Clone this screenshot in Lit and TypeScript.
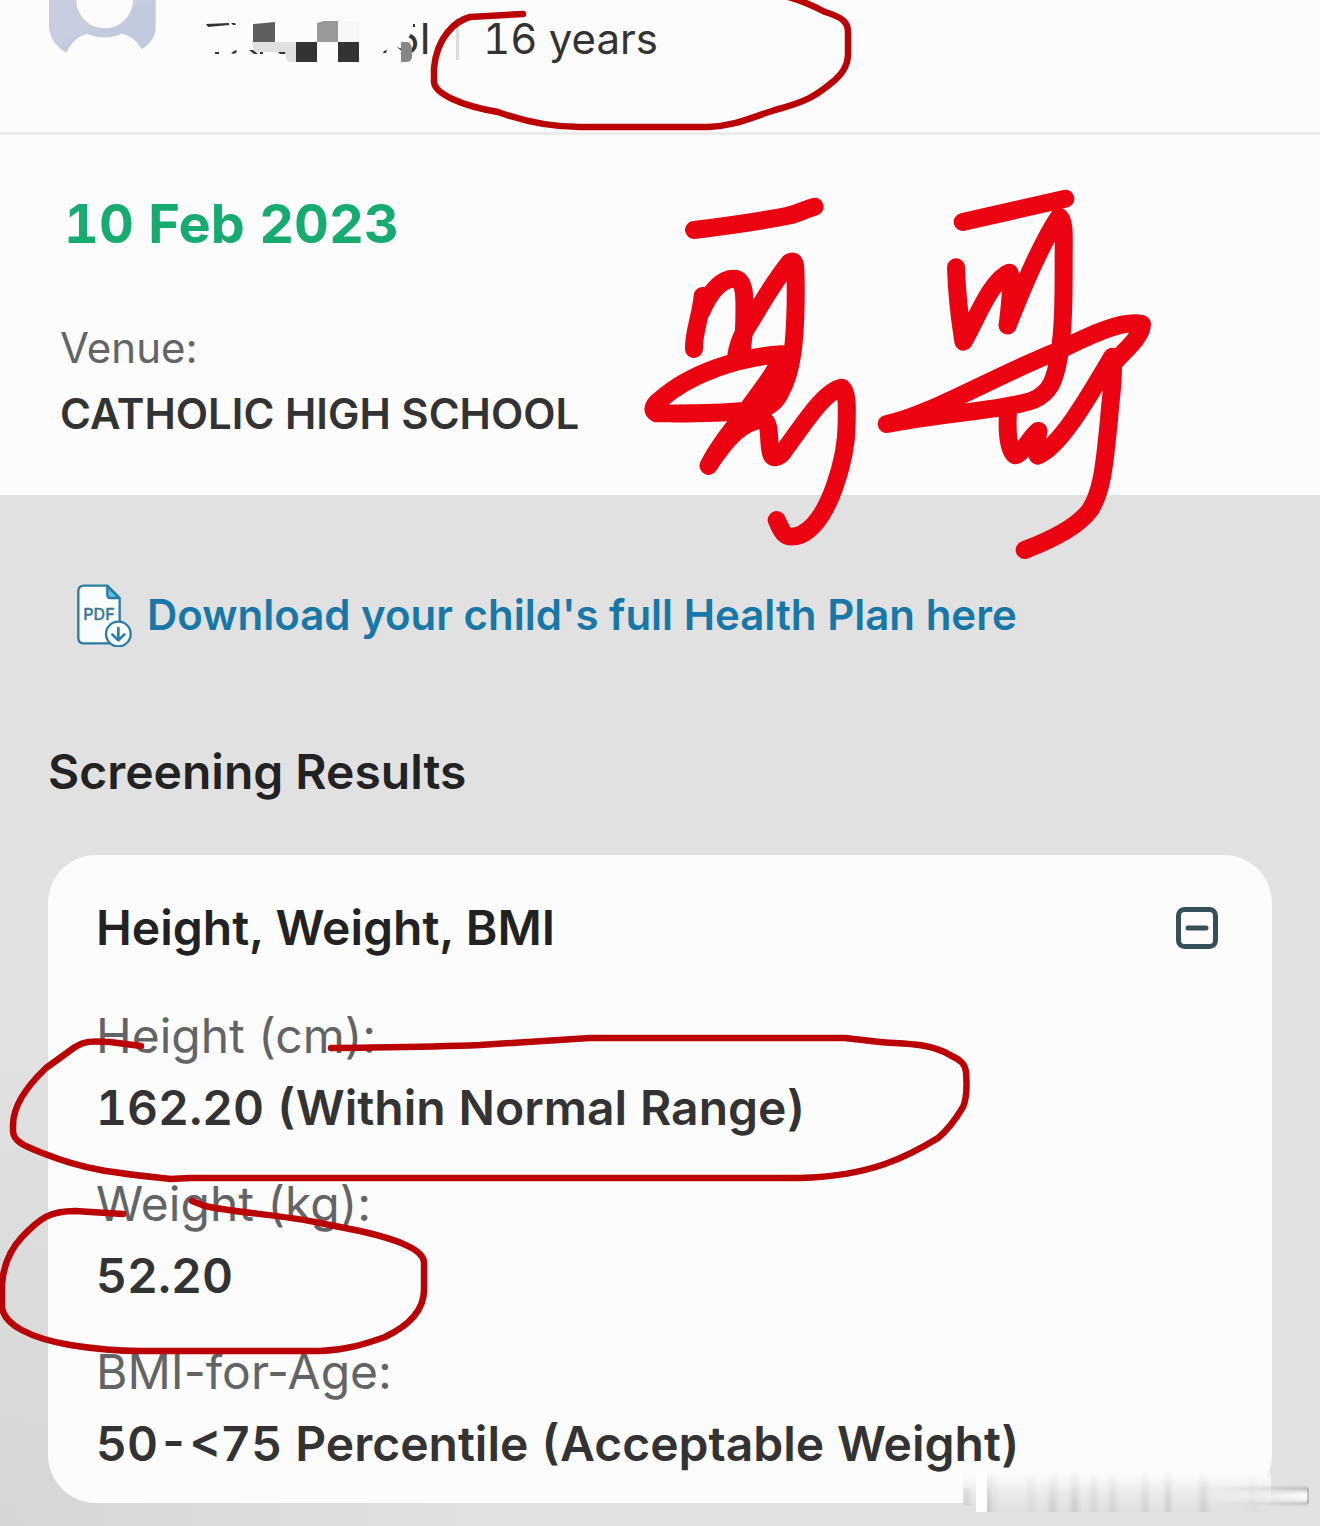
import { LitElement, html, css, svg } from "lit";
import { customElement, property, state } from "lit/decorators.js";

interface Reading {
  label: string;
  value: string;
}

const READINGS: Reading[] = [
  { label: "Height (cm):", value: "162.20 (Within Normal Range)" },
  { label: "Weight (kg):", value: "52.20" },
  { label: "BMI-for-Age:", value: "50-<75 Percentile (Acceptable Weight)" },
];

/* Vertical streaks of the smudge: x, width, colour, opacity */
const STREAKS: [number, number, string, number][] = [
  [22, 12, "#c9c9c9", 0.3],
  [64, 8, "#c4c4c4", 0.3],
  [86, 8, "#bdbdbd", 0.45],
  [108, 7, "#b9b9b9", 0.5],
  [128, 6, "#bdbdbd", 0.4],
  [146, 7, "#bdbdbd", 0.4],
  [179, 6, "#bdbdbd", 0.45],
  [202, 6, "#b9b9b9", 0.45],
  [237, 7, "#b9b9b9", 0.5],
  [286, 8, "#c9c9c9", 0.2],
];

@customElement("profile-bar")
export class ProfileBar extends LitElement {
  static styles = css`
    .bar {
      display: flex;
      align-items: flex-start;
      box-sizing: border-box;
      min-height: 135px;
      padding: 0 48px;
      border-bottom: 3px solid #ebebeb;
      background: #fcfcfc;
    }
    .avatar {
      flex: none;
      width: 108px;
      height: 54px;
      margin-right: 48px;
    }
    .masked {
      flex: none;
      width: 228px;
      height: 66px;
    }
    .masked-text {
      font: 400 42px Inter, "Liberation Sans", sans-serif;
      fill: #333;
    }
    .rule {
      flex: none;
      width: 3px;
      height: 42px;
      margin: 18px 24px 0;
      background: #dcdcdc;
    }
    .age {
      margin-top: 6px;
      font-size: 42px;
      line-height: 66px;
      font-variant-numeric: tabular-nums;
      color: #333;
    }
  `;

  render() {
    return html`
      <header class="bar">
        <svg class="avatar" viewBox="0 0 324 162" aria-hidden="true">
          <defs>
            <linearGradient id="av" x1="0" y1="0" x2="1" y2="1">
              <stop offset="0.45" stop-color="#c8cddf" />
              <stop offset="0.5" stop-color="#c2cadd" />
            </linearGradient>
          </defs>
          <path
            fill="url(#av)"
            d="M3 0V80C5 115 25 140 56 158C66 132 88 108 118 101C148 116 188 116 220 101C250 108 270 124 280 148C306 133 323 110 323 80V0H255A85 85 0 0 1 85 0Z"
          />
        </svg>
        <svg class="masked" viewBox="0 0 228 66" aria-hidden="true">
          <text class="masked-text" x="190" y="54">5I</text>
          <path fill="#fcfcfc" d="M184 16H208V32L204 38L206 60H184ZM206 16H217V22L215 26V32H204Z" />
          <path fill="#333" d="M209 24H211V27H209ZM2 24L25 23V25L4 27ZM27 23H31L32 25H29ZM11 52H15V54H11ZM27 53L32 50L33 52L30 54ZM45 50H49L54 54H50ZM56 52H59V54H56ZM74 52L84 51L82 54H76ZM180 51L183 50L182 53H179ZM193 47L201 50V54Z" />
          <path fill="#5f5f5f" d="M49 24L71 22V42H49Z" />
          <path fill="#e0e0e0" d="M49 42H92V62H86Q82 62 81 52H55Q49 52 49 46Z" />
          <path fill="#999" d="M113 23L120 21H134V42H113Z" />
          <path fill="#f7f7f7" d="M134 21H155V42H134Z" />
          <path fill="#333" d="M92 42H113V62H92ZM134 42H155V62H134Z" />
          <path fill="#868686" d="M197 42H204Q208 44 208 50V57Q207 62 203 62H197Z" />
        </svg>
        <span class="rule"></span>
        <span class="age">16 years</span>
      </header>
    `;
  }
}

@customElement("visit-details")
export class VisitDetails extends LitElement {
  static styles = css`
    .visit {
      padding: 57px 60px 48px;
      background: #fcfcfc;
    }
    .date {
      margin: 0 0 59px 4px;
      font-size: 54px;
      line-height: 64px;
      font-weight: 700;
      font-variant-numeric: tabular-nums;
      color: #16ab70;
    }
    .venue {
      margin: 0;
      font-size: 42px;
      line-height: 66px;
    }
    .term {
      color: #636466;
    }
    .name {
      margin: 0;
      font-weight: 600;
      color: #333;
    }
  `;

  render() {
    return html`
      <section class="visit">
        <h1 class="date">10 Feb 2023</h1>
        <dl class="venue">
          <dt class="term">Venue:</dt>
          <dd class="name">CATHOLIC HIGH SCHOOL</dd>
        </dl>
      </section>
    `;
  }
}

@customElement("plan-link")
export class PlanLink extends LitElement {
  static styles = css`
    .link {
      display: flex;
      align-items: center;
      gap: 15px;
      padding: 0 28px;
      font-size: 42px;
      line-height: 66px;
      font-weight: 600;
      color: #1778a8;
      text-decoration: none;
    }
    .icon {
      flex: none;
      width: 56px;
      height: 64px;
    }
    .tag {
      font: 500 48px Inter, "Liberation Sans", sans-serif;
      fill: #33789a;
      stroke: #33789a;
      stroke-width: 1;
    }
  `;

  render() {
    return html`
      <a class="link" href="#health-plan">
        <svg class="icon" viewBox="0 0 168 192" aria-hidden="true">
          <path
            d="M24 8H94L131 45V167Q131 181 117 181H24Q7 181 7 164V25Q7 8 24 8Z"
            fill="#fbfeff"
            stroke="#2b7da3"
            stroke-width="7"
            stroke-linejoin="round"
          />
          <path d="M94 10V36Q94 45 103 45H130Z" fill="#5bc3ea" stroke="#2b7da3" stroke-width="7" stroke-linejoin="round" />
          <text class="tag" x="22" y="111">PDF</text>
          <circle cx="127" cy="153" r="37" fill="#fbfeff" stroke="#2b7da3" stroke-width="7" />
          <path d="M127 135V170M109 154L127 172L145 154" fill="none" stroke="#2b7da3" stroke-width="8" stroke-linecap="round" stroke-linejoin="round" />
        </svg>
        <span>Download your child's full Health Plan here</span>
      </a>
    `;
  }
}

@customElement("result-card")
export class ResultCard extends LitElement {
  @property() heading = "";
  @property({ attribute: false }) readings: Reading[] = [];
  @state() private open = true;

  static styles = css`
    .card {
      padding: 37px 54px 23px 48px;
      border-radius: 48px;
      background: #fcfcfc;
      font-size: 48px;
      line-height: 72px;
    }
    .head {
      display: flex;
      align-items: center;
      justify-content: space-between;
    }
    .title {
      margin: 0;
      font-size: 48px;
      font-weight: 600;
      color: #222;
    }
    .toggle {
      flex: none;
      width: 42px;
      height: 42px;
      padding: 0;
      border: 0;
      background: none;
      cursor: pointer;
    }
    .glyph {
      display: block;
      width: 42px;
      height: 42px;
    }
    .list {
      display: grid;
      gap: 24px;
      margin: 36px 0 0;
    }
    .term {
      color: #636466;
    }
    .value {
      margin: 0;
      font-weight: 600;
      font-variant-numeric: tabular-nums;
      color: #333;
    }
  `;

  render() {
    return html`
      <section class="card">
        <div class="head">
          <h3 class="title">${this.heading}</h3>
          <button
            class="toggle"
            aria-label=${this.open ? "Collapse" : "Expand"}
            aria-expanded=${this.open}
            @click=${() => (this.open = !this.open)}
          >
            <svg class="glyph" viewBox="0 0 42 42" fill="none" stroke="#355059" stroke-width="5" stroke-linecap="round">
              <rect x="2.5" y="2.5" width="37" height="37" rx="6" />
              <path d=${this.open ? "M12 21H30" : "M12 21H30M21 12V30"} />
            </svg>
          </button>
        </div>
        ${this.open
          ? html`<dl class="list">
              ${this.readings.map(
                (r) => html`<div>
                  <dt class="term">${r.label}</dt>
                  <dd class="value">${r.value}</dd>
                </div>`
              )}
            </dl>`
          : ""}
      </section>
    `;
  }
}

@customElement("pen-marks")
export class PenMarks extends LitElement {
  static styles = css`
    .ink {
      position: absolute;
      top: 0;
      left: 0;
      width: 1320px;
      height: 1526px;
      pointer-events: none;
    }
  `;

  render() {
    return html`
      <svg class="ink" viewBox="0 0 1320 1526" fill="none" stroke-linecap="round" stroke-linejoin="round" aria-hidden="true">
        <defs>
          <linearGradient id="fade" x1="0" y1="0" x2="0" y2="1">
            <stop offset="0" stop-color="#fff" stop-opacity="0" />
            <stop offset="0.8" stop-color="#fff" />
          </linearGradient>
          <linearGradient id="smear" x1="0" y1="0" x2="0" y2="1">
            <stop offset="0" stop-color="#fcfcfc" stop-opacity="0" />
            <stop offset="0.2" stop-color="#f8f8f8" />
            <stop offset="0.55" stop-color="#ebebeb" />
            <stop offset="1" stop-color="#e0e0e0" />
          </linearGradient>
          <linearGradient id="tip" x1="0" y1="0" x2="0" y2="1">
            <stop offset="0" stop-color="#bbb" stop-opacity="0" />
            <stop offset="0.15" stop-color="#bbb" />
            <stop offset="0.35" stop-color="#f0f0f0" />
            <stop offset="0.5" stop-color="#fff" />
            <stop offset="0.7" stop-color="#eee" />
            <stop offset="0.85" stop-color="#c2c2c2" />
            <stop offset="1" stop-color="#ccc" stop-opacity="0" />
          </linearGradient>
          <linearGradient id="tipfade" x1="0" y1="0" x2="1" y2="0">
            <stop offset="0" stop-color="#fff" stop-opacity="0" />
            <stop offset="0.6" stop-color="#fff" stop-opacity="0.3" />
            <stop offset="1" stop-color="#fff" />
          </linearGradient>
          <mask id="m"><rect width="346" height="42" fill="url(#fade)" /></mask>
          <mask id="mt"><rect x="230" width="116" height="42" fill="url(#tipfade)" /></mask>
          <filter id="soft" x="-50%" y="-10%" width="200%" height="120%"><feGaussianBlur stdDeviation="2 0" /></filter>
        </defs>

        <svg x="963" y="1470" width="346" height="42">
          <rect width="308" height="42" fill="url(#smear)" />
          <g mask="url(#m)">
            ${STREAKS.map(
              ([x, w, c, o]) => svg`<rect x=${x} y="0" width=${w} height="42" fill=${c} opacity=${o} filter="url(#soft)" />`
            )}
            <rect x="0" y="18" width="8" height="18" fill="#bbb" opacity="0.4" filter="url(#soft)" />
            <rect x="23" y="0" width="4" height="42" fill="#aaa" opacity="0.5" filter="url(#soft)" />
          </g>
          <rect x="13" y="0" width="11" height="42" fill="#fdfdfd" />
          <g mask="url(#mt)"><rect x="230" y="15" width="115" height="22" fill="url(#tip)" /></g>
          <path d="M345 19V33" stroke="#8c8c8c" stroke-width="1" />
        </svg>

        <g stroke="#ba0305" stroke-width="6.5">
          <path d="M523 14L470 17C455 21 437 37 434 68V82C435 94 462 106 498 112C520 120 550 127 580 127H708C735 126 750 118 775 110C805 102 815 97 835 80C845 71 848 62 848 55V32C848 22 842 17 825 12C812 5 800 0 785 -4" />
          <path d="M141 1046L110 1042C90 1041 85 1041 75 1047L46 1068C25 1088 13 1108 13 1125V1131C13 1143 30 1148 45 1154C85 1170 115 1173 170 1179L190 1178H800C835 1177 865 1171 885 1164C905 1157 925 1146 938 1138C949 1129 957 1117 963 1107C967 1098 967 1085 966 1072C965 1063 960 1060 950 1055C928 1042 900 1044 880 1042L845 1038H590L480 1045C430 1047 400 1047 331 1048" />
          <path d="M123 1214L75 1211C50 1211 40 1218 22 1237C8 1252 3 1268 2 1285V1308C5 1325 30 1338 70 1345C95 1349 120 1351 140 1351H320C350 1350 370 1342 385 1337C410 1325 424 1310 424 1290V1262C423 1250 400 1240 360 1231L320 1223C290 1216 230 1212 205 1206L192 1201" />
        </g>

        <svg x="630" y="170" width="260" height="390" viewBox="0 0 780 1170" stroke="#ec0312" stroke-width="54">
          <path d="M192 180C290 168 380 156 470 138C510 130 528 116 554 110" />
          <path d="M192 537C190 490 212 440 218 378" />
          <path d="M214 425C240 365 275 325 313 326C350 330 343 400 343 450C343 500 336 520 334 560" />
          <path d="M318 570C320 520 345 480 365 450C400 390 440 325 478 278C492 268 496 280 496 300C498 340 497 370 497 400C495 500 490 600 450 670C430 710 390 725 340 723C250 732 160 730 80 730C60 720 75 700 90 690C180 610 330 560 455 553C445 600 390 665 340 735C310 775 262 830 236 887" />
          <path d="M236 887C290 805 335 755 400 748C425 760 412 820 424 852C428 870 450 860 460 845C520 765 580 665 635 653C655 670 650 720 650 760C650 860 600 1050 515 1093C460 1115 455 1080 440 1050" />
          <path d="M440 600L370 705" />
        </svg>

        <svg x="860" y="170" width="310" height="400" viewBox="0 0 930 1200" stroke="#ec0312" stroke-width="54">
          <path d="M308 156L616 86" />
          <path d="M288 292C290 360 298 440 310 515C340 470 390 330 448 308C460 330 450 400 443 466" />
          <path d="M443 466C470 400 530 240 597 140C615 150 611 200 611 270C611 400 610 480 597 560C585 630 570 670 520 690C440 720 240 730 80 762C200 740 400 620 600 540C700 490 790 450 846 462C845 500 800 535 765 575" />
          <path d="M444 725C440 790 445 840 465 856C490 850 510 800 535 783" />
          <path d="M535 783C530 820 525 840 533 857C600 830 680 690 757 560C765 620 750 690 747 750C735 860 730 960 690 1020C650 1075 560 1115 494 1140" />
        </svg>
      </svg>
    `;
  }
}

@customElement("app-root")
export class AppRoot extends LitElement {
  static styles = css`
    :host {
      display: block;
      position: relative;
      min-height: 100vh;
      overflow: hidden;
      background: radial-gradient(circle at 0 100%, #d6d6d6, #e1e1e1 480px);
      font-family: Inter, "Liberation Sans", sans-serif;
    }
    .content {
      padding: 87px 48px 23px;
    }
    .section-title {
      margin: 88px 0 47px;
      font-size: 48px;
      line-height: 72px;
      font-weight: 600;
      color: #222;
    }
  `;

  render() {
    return html`
      <profile-bar></profile-bar>
      <visit-details></visit-details>
      <main class="content">
        <plan-link></plan-link>
        <h2 class="section-title">Screening Results</h2>
        <result-card heading="Height, Weight, BMI" .readings=${READINGS}></result-card>
      </main>
      <pen-marks></pen-marks>
    `;
  }
}
